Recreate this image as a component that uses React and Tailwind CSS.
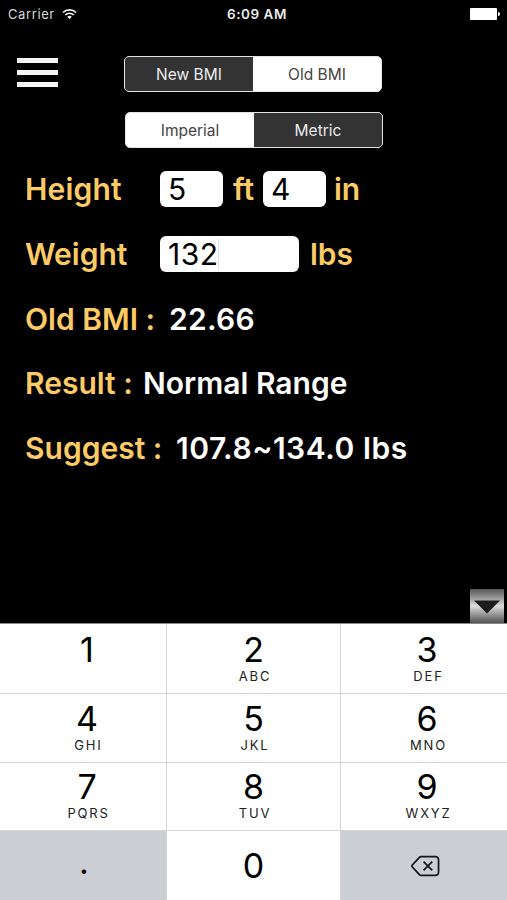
import clsx from 'clsx';

const KEYS = [
  { digit: '1', letters: '' },
  { digit: '2', letters: 'ABC' },
  { digit: '3', letters: 'DEF' },
  { digit: '4', letters: 'GHI' },
  { digit: '5', letters: 'JKL' },
  { digit: '6', letters: 'MNO' },
  { digit: '7', letters: 'PQRS' },
  { digit: '8', letters: 'TUV' },
  { digit: '9', letters: 'WXYZ' },
];

function StatusBar() {
  return (
    <div className="h-7 grid grid-cols-3 items-center pl-2 pr-[7px] text-[13px] leading-none">
      <div className="flex items-center gap-[7px]">
        <span className="text-[#d8d8d8] tracking-[0.6px]">Carrier</span>
        <svg width="15" height="12" viewBox="0 0 16 12" fill="none" stroke="#f2f2f2" strokeWidth="1.8">
          <path d="M1 4.4a10 10 0 0 1 14 0" />
          <path d="M3.5 7.1a6.3 6.3 0 0 1 9 0" />
          <path d="M8 11.5 5.6 9a3.4 3.4 0 0 1 4.8 0Z" fill="#f2f2f2" stroke="none" />
        </svg>
      </div>
      <span className="text-center font-semibold text-[13.5px] text-[#ececec] tracking-[0.55px] pl-[6px] pt-px">6:09 AM</span>
      <div className="flex items-center justify-end">
        <div className="w-[27px] h-3 bg-white rounded-[1px]" />
        <div className="w-[2px] h-1 ml-px bg-white rounded-r-full" />
      </div>
    </div>
  );
}

function Segmented({ options, selected, className }) {
  return (
    <div className={clsx('flex w-[258px] h-[35.5px] rounded-[5px] border-[1.5px] border-[#e4e4e4] bg-white overflow-hidden', className)}>
      {options.map((label) => (
        <button
          key={label}
          className={clsx(
            'flex-1 text-[15.5px] leading-none pt-px',
            label === selected ? 'bg-[#333] text-[#ececec]' : 'bg-white text-[#444]'
          )}
        >
          {label}
        </button>
      ))}
    </div>
  );
}

function Field({ value, focused, className }) {
  return (
    <div className={clsx('h-9 rounded-[6px] bg-white text-black text-[30px] flex items-center pl-2', className)}>
      <span className="tracking-[0.5px]">{value}</span>
      {focused && <span className="w-[1.5px] h-[30px] -ml-px bg-[#dcdcf8]" />}
    </div>
  );
}

function Key({ digit, letters, index }) {
  return (
    <button
      className={clsx(
        'bg-white flex flex-col items-center',
        index < 3 && 'pt-[9px]',
        index >= 3 && index < 6 && 'pt-2',
        index >= 6 && 'pt-[7px]',
        index % 3 === 0 && 'pl-2',
        index % 3 === 2 && 'pl-[6px]'
      )}
    >
      <span className="text-[34px] leading-[34px]">{digit}</span>
      <span className="text-[13px] leading-4 mt-[1px] pl-[3px] tracking-[1.8px] text-[#222]">{letters}</span>
    </button>
  );
}

function App() {
  return (
    <div className="w-[507px] h-[900px] bg-black text-white flex flex-col overflow-hidden font-['Inter',sans-serif] [font-feature-settings:'calt'_0]">
      <StatusBar />

      <header className="flex pl-[17px] pt-7">
        <button className="w-[41px] h-[29px] mt-[2px] flex flex-col justify-between">
          <span className="block w-full h-[5px] bg-[#f6f6f6]" />
          <span className="block w-full h-[5px] bg-[#f6f6f6]" />
          <span className="block w-full h-[5px] bg-[#f6f6f6]" />
        </button>
        <div className="ml-[66px] flex flex-col gap-[20.5px]">
          <Segmented options={['New BMI', 'Old BMI']} selected="New BMI" />
          <Segmented options={['Imperial', 'Metric']} selected="Metric" className="ml-px" />
        </div>
      </header>

      <main className="flex-1 pl-[25px] pt-[23.5px] flex flex-col gap-[28.8px] text-[30px] leading-9 font-semibold text-[#fdcb66]">
        <div className="h-9 flex items-center">
          <span className="w-[135px] tracking-[0.2px]">Height</span>
          <Field value="5" className="w-[63px] font-normal" />
          <span className="ml-[10px] w-[30px]">ft</span>
          <Field value="4" className="w-[63px] font-normal" />
          <span className="ml-2">in</span>
        </div>
        <div className="h-9 flex items-center">
          <span className="w-[135px]">Weight</span>
          <Field value="132" focused className="w-[139px] font-normal" />
          <span className="ml-[11px]">lbs</span>
        </div>
        <div className="h-9 flex items-center">
          <span className="w-36">Old BMI :</span>
          <span className="text-white tracking-[0.3px]">22.66</span>
        </div>
        <div className="h-9 flex items-center">
          <span className="w-[118px]">Result :</span>
          <span className="text-white">Normal Range</span>
        </div>
        <div className="h-9 flex items-center">
          <span className="w-[151px]">Suggest :</span>
          <span className="text-white tracking-[0.55px]">107.8~134.0 lbs</span>
        </div>
      </main>

      {/* Keyboard dismiss button */}
      <div className="flex justify-end pr-[3px]">
        <button className="w-[34px] h-[34px] flex items-center justify-center bg-linear-to-b from-[#555] via-[#ddd] to-[#555]">
          <svg width="26" height="14" viewBox="0 0 26 14" className="mt-[2px]">
            <path d="M0 0.5h26L13 13.5Z" fill="#1c1c1c" />
          </svg>
        </button>
      </div>

      <div className="h-[277px] shrink-0 border-t border-[#888] grid grid-cols-[166px_173px_166px] grid-rows-[69px_68px_67px_69px] gap-px bg-[#d4d5d7] text-black">
        {KEYS.map((key, i) => (
          <Key key={key.digit} {...key} index={i} />
        ))}
        <button className="bg-[#cbced3] text-[34px] leading-none pb-[7px] pl-[2px]">.</button>
        <button className="bg-white text-[34px] leading-none">0</button>
        <button className="bg-[#cbced3] flex items-center justify-center pl-[2px]">
          <svg width="29" height="22" viewBox="0 0 30 22" fill="none" stroke="#151719" strokeWidth="1.8" strokeLinejoin="round">
            <path d="M10.5 1.2H25q3.5 0 3.5 3.5v12.6q0 3.5-3.5 3.5H10.5q-1 0-1.8-.9L1.4 12q-.9-1 0-2l7.3-7.9q.8-.9 1.8-.9Z" />
            <path d="m13 6.5 9 9M22 6.5l-9 9" />
          </svg>
        </button>
      </div>
    </div>
  );
}

export default App;
